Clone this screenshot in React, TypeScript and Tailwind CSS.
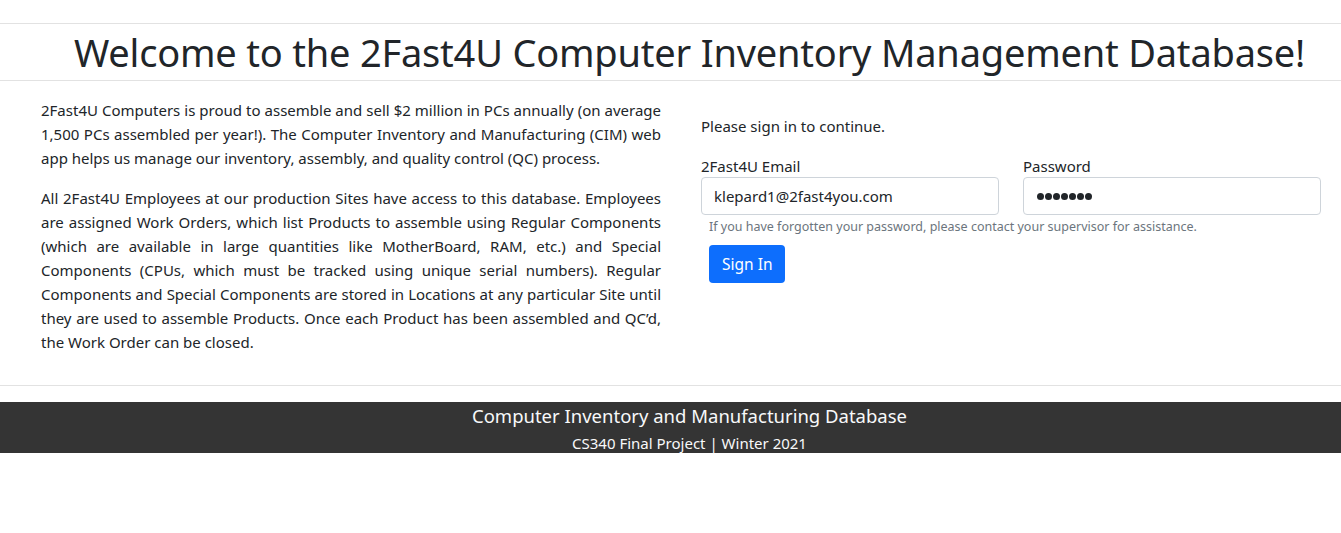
import React from 'react';

const FONT = "font-['Noto_Sans',_'Open_Sans',_sans-serif]";

const para1 = [
  '2Fast4U Computers is proud to assemble and sell $2 million in PCs annually (on average',
  '1,500 PCs assembled per year!). The Computer Inventory and Manufacturing (CIM) web',
  'app helps us manage our inventory, assembly, and quality control (QC) process.',
];

const para2 = [
  'All 2Fast4U Employees at our production Sites have access to this database. Employees',
  'are assigned Work Orders, which list Products to assemble using Regular Components',
  '(which are available in large quantities like MotherBoard, RAM, etc.) and Special',
  'Components (CPUs, which must be tracked using unique serial numbers). Regular',
  'Components and Special Components are stored in Locations at any particular Site until',
  'they are used to assemble Products. Once each Product has been assembled and QC\u2019d,',
  'the Work Order can be closed.',
];

function Justified({ lines }: { lines: string[] }) {
  return (
    <p className="mb-4">
      {lines.map((line, i) => (
        <span
          key={i}
          className={
            i < lines.length - 1
              ? 'block text-justify [text-align-last:justify]'
              : 'block text-left'
          }
        >
          {line}
        </span>
      ))}
    </p>
  );
}

export default function App() {
  return (
    <div className={`${FONT} text-[#212529] bg-white w-[1341px] min-h-[533px]`}>
      <div className="h-[23px]" />
      <hr className="border-0 border-t border-[#e2e2e2]" />
      <div className="h-[56px] pl-[38px] flex items-center justify-center">
        <h1 className="text-[38px] leading-[48px] whitespace-nowrap tracking-[-0.2px]">
          Welcome to the 2Fast4U Computer Inventory Management Database!
        </h1>
      </div>
      <hr className="border-0 border-t border-[#e2e2e2]" />

      <div className="flex gap-[40px] pl-[41px] pr-[20px] pt-[17px] text-[15px] leading-[24px]">
        <div className="w-[620px]">
          <Justified lines={para1} />
          <Justified lines={para2} />
        </div>

        <div className="w-[620px] pt-[16px]">
          <p className="mb-[16px]">Please sign in to continue.</p>
          <div className="flex gap-[24px]">
            <div className="flex-1">
              <label className="block pt-[1px] leading-[22px]">2Fast4U Email</label>
              <div className="h-[38px] border border-[#ced4da] rounded-[4px] px-[12px] flex items-center">
                klepard1@2fast4you.com
              </div>
            </div>
            <div className="flex-1">
              <label className="block pt-[1px] leading-[22px]">Password</label>
              <div className="h-[38px] border border-[#ced4da] rounded-[4px] px-[13px] flex items-center gap-[1px]">
                {Array.from({ length: 7 }).map((_, i) => (
                  <span key={i} className="w-[7px] h-[7px] rounded-full bg-[#212529] inline-block" />
                ))}
              </div>
            </div>
          </div>
          <div className="pl-[8px]">
            <p className="text-[12.5px] leading-[20px] text-[#6c757d] mt-[2px]">
              If you have forgotten your password, please contact your supervisor for assistance.
            </p>
            <button className="mt-[8px] h-[38px] px-[13px] bg-[#0d6efd] text-white rounded-[4px] text-[15.5px]">
              Sign In
            </button>
          </div>
        </div>
      </div>

      <div className="h-[15px]" />
      <hr className="border-0 border-t border-[#e2e2e2]" />
      <div className="h-[16px]" />
      <footer className="h-[51px] pl-[38px] bg-[#343434] text-[#f8f9fa] text-center overflow-hidden">
        <div className="text-[18.5px] leading-[28px]">Computer Inventory and Manufacturing Database</div>
        <div className="text-[15px] leading-[27px]">CS340 Final Project | Winter 2021</div>
      </footer>
    </div>
  );
}
